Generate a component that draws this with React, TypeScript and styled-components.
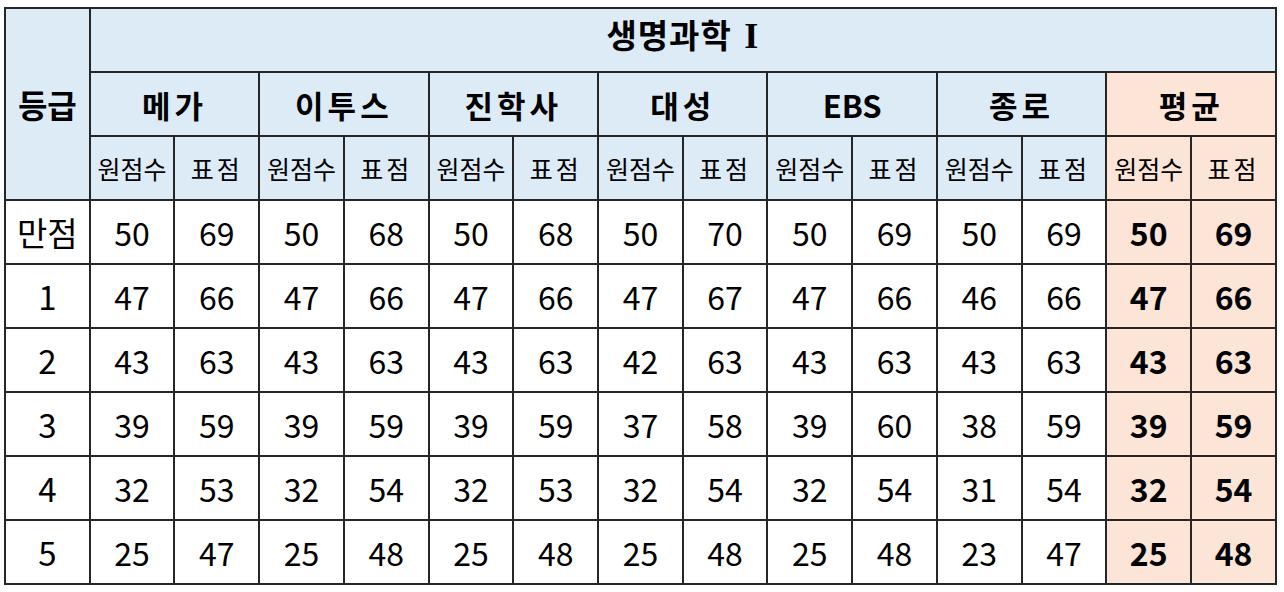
import styled, { createGlobalStyle } from "styled-components";

const GlobalStyle = createGlobalStyle`
  html, body {
    margin: 0;
    padding: 0;
    background: #ffffff;
  }
  body {
    font-family: "Noto Sans CJK KR", "Noto Sans", sans-serif;
    color: #000;
  }
`;

const vendors = ["메가", "이투스", "진학사", "대성", "EBS", "종로"];

const rows: { grade: string; scores: number[] }[] = [
  { grade: "만점", scores: [50, 69, 50, 68, 50, 68, 50, 70, 50, 69, 50, 69, 50, 69] },
  { grade: "1", scores: [47, 66, 47, 66, 47, 66, 47, 67, 47, 66, 46, 66, 47, 66] },
  { grade: "2", scores: [43, 63, 43, 63, 43, 63, 42, 63, 43, 63, 43, 63, 43, 63] },
  { grade: "3", scores: [39, 59, 39, 59, 39, 59, 37, 58, 39, 60, 38, 59, 39, 59] },
  { grade: "4", scores: [32, 53, 32, 54, 32, 53, 32, 54, 32, 54, 31, 54, 32, 54] },
  { grade: "5", scores: [25, 47, 25, 48, 25, 48, 25, 48, 25, 48, 23, 47, 25, 48] },
];

const App = () => {
  return (
    <>
      <GlobalStyle />
      <Page>
        <Table>
          <colgroup>
            {Array.from({ length: 15 }).map((_, i) => (
              <col key={i} />
            ))}
          </colgroup>
          <thead>
            <tr>
              <GradeHead rowSpan={3}>등급</GradeHead>
              <TitleCell colSpan={14}>
                생명과학 <Numeral>I</Numeral>
              </TitleCell>
            </tr>
            <tr>
              {vendors.map((v) => (
                <VendorCell key={v} colSpan={2} $latin={v === "EBS"}>
                  {v}
                </VendorCell>
              ))}
              <VendorCell colSpan={2} $avg>
                평균
              </VendorCell>
            </tr>
            <tr>
              {[...vendors, "평균"].map((v) => (
                <SubPair key={v} avg={v === "평균"} />
              ))}
            </tr>
          </thead>
          <tbody>
            {rows.map((r) => (
              <tr key={r.grade}>
                <GradeCell>{r.grade}</GradeCell>
                {r.scores.map((s, i) => (
                  <ScoreCell key={i} $avg={i >= 12}>
                    {s}
                  </ScoreCell>
                ))}
              </tr>
            ))}
          </tbody>
        </Table>
      </Page>
    </>
  );
};

const SubPair = ({ avg }: { avg: boolean }) => (
  <>
    <SubCell $avg={avg}>원점수</SubCell>
    <SubCell $avg={avg} $spaced>
      표점
    </SubCell>
  </>
);

export default App;

// ----style----
const Page = styled.div`
  padding: 7px 0 0 4px;
`;

const Table = styled.table`
  width: 1273px;
  table-layout: fixed;
  border-collapse: collapse;
  border: 2px solid #262626;

  tr {
    height: 64px;
  }
`;

const BaseCell = styled.td`
  border: 2px solid #262626;
  padding: 0;
  text-align: center;
  vertical-align: middle;
  line-height: 1;
  white-space: nowrap;
  overflow: hidden;
`;

const GradeHead = styled(BaseCell).attrs({ as: "th" })`
  background: #ddebf7;
  font-size: 32px;
  font-weight: 700;
`;

const TitleCell = styled(BaseCell).attrs({ as: "th" })`
  background: #ddebf7;
  font-size: 33px;
  font-weight: 700;
  letter-spacing: 1px;
  padding-bottom: 8px;
`;

const Numeral = styled.span`
  font-family: "Liberation Serif", "DejaVu Serif", serif;
  font-weight: 700;
  font-size: 36px;
  margin-left: 4px;
`;

const VendorCell = styled(BaseCell).attrs({ as: "th" })<{ $avg?: boolean; $latin?: boolean }>`
  background: ${(p) => (p.$avg ? "#fce4d6" : "#ddebf7")};
  font-size: 31px;
  font-weight: 700;
  letter-spacing: ${(p) => (p.$latin ? "0" : "4px")};
`;

const SubCell = styled(BaseCell).attrs({ as: "th" })<{ $avg?: boolean; $spaced?: boolean }>`
  background: ${(p) => (p.$avg ? "#fce4d6" : "#ddebf7")};
  font-size: 25px;
  font-weight: 400;
  letter-spacing: ${(p) => (p.$spaced ? "3px" : "0")};
`;

const GradeCell = styled(BaseCell)`
  font-size: 33px;
  font-weight: 400;
`;

const ScoreCell = styled(BaseCell)<{ $avg?: boolean }>`
  background: ${(p) => (p.$avg ? "#fce4d6" : "#ffffff")};
  font-size: 32px;
  font-weight: ${(p) => (p.$avg ? 700 : 400)};
`;
